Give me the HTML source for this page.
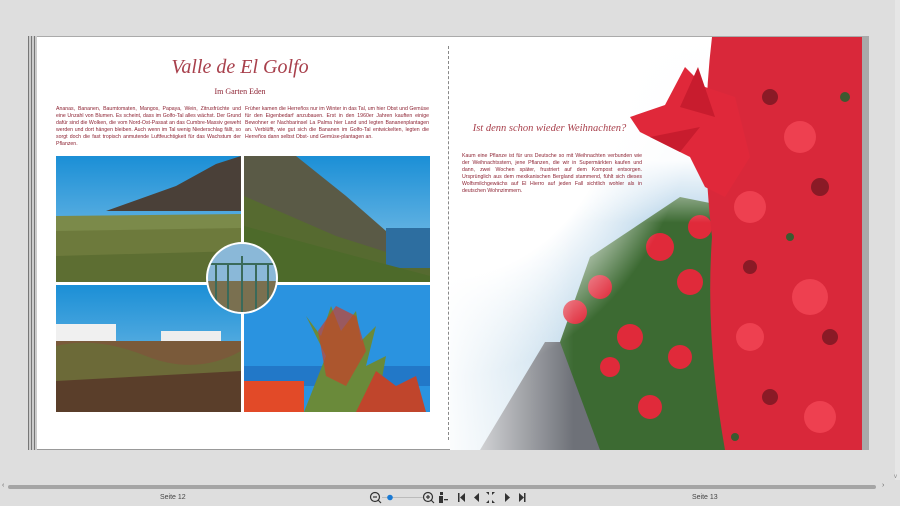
<!DOCTYPE html>
<html><head><meta charset="utf-8"><style>
*{margin:0;padding:0;box-sizing:border-box}
body{width:900px;height:506px;background:#dedede;position:relative;overflow:hidden;font-family:"Liberation Sans",sans-serif}
.abs{position:absolute}
.page{left:37px;top:36px;width:827px;height:414px;background:#fff;border-top:1px solid #aaa;border-bottom:1px solid #999}
.txt{font-size:5.2px;line-height:6.9px;color:#8c2232;text-align:justify}
.script{font-family:"Liberation Serif",serif;font-style:italic;color:#a8404c;white-space:nowrap}
</style></head><body>
<div class="abs" style="left:28px;top:36px;width:9px;height:414px;background:repeating-linear-gradient(90deg,#777 0 1px,#ccc 1px 3px)"></div>
<div class="page abs"></div>
<div class="abs" style="left:448px;top:46px;height:394px;border-left:1px dashed #888"></div>

<div class="abs script" style="left:140px;top:56px;width:200px;text-align:center;font-size:20px">Valle de El Golfo</div>
<div class="abs" style="left:140px;top:87px;width:200px;text-align:center;font-family:'Liberation Serif',serif;font-size:8px;color:#8c2232">Im Garten Eden</div>
<div class="abs txt" style="left:56px;top:106px;width:185px">Ananas, Bananen, Baumtomaten, Mangos, Papaya, Wein, Zitrusfrüchte und eine Unzahl von Blumen. Es scheint, dass im Golfo-Tal alles wächst. Der Grund dafür sind die Wolken, die vom Nord-Ost-Passat an das Cumbre-Massiv geweht werden und dort hängen bleiben. Auch wenn im Tal wenig Niederschlag fällt, so sorgt doch die fast tropisch anmutende Luftfeuchtigkeit für das Wachstum der Pflanzen.</div>
<div class="abs txt" style="left:245px;top:106px;width:184px">Früher kamen die Herreños nur im Winter in das Tal, um hier Obst und Gemüse für den Eigenbedarf anzubauen. Erst in den 1960er Jahren kauften einige Bewohner er Nachbarinsel La Palma hier Land und legten Bananenplantagen an. Verblüfft, wie gut sich die Bananen im Golfo-Tal entwickelten, legten die Herreños dann selbst Obst- und Gemüse-plantagen an.</div>

<svg class="abs" style="left:56px;top:156px" width="374" height="256" viewBox="0 0 374 256">
<defs>
<linearGradient id="sky" x1="0" y1="0" x2="0" y2="1"><stop offset="0" stop-color="#1b8fd6"/><stop offset="1" stop-color="#8ec8ea"/></linearGradient>
<clipPath id="c"><circle cx="186" cy="122" r="34"/></clipPath>
</defs>
<rect x="0" y="0" width="185" height="126" fill="url(#sky)"/>
<path d="M50 55 L120 30 L160 8 L185 0 L185 55 Z" fill="#4a4038"/>
<path d="M0 60 L185 58 L185 126 L0 126Z" fill="#7b8a4a"/>
<path d="M0 75 L185 72 L185 126 L0 126Z" fill="#6d7a3c"/>
<path d="M0 100 L185 95 L185 126 L0 126Z" fill="#5d6e32"/>
<rect x="188" y="0" width="186" height="126" fill="url(#sky)"/>
<path d="M188 0 L240 0 L290 40 L330 75 L374 80 L374 126 L188 126Z" fill="#5a5a46"/>
<path d="M188 40 L280 80 L374 110 L374 126 L188 126Z" fill="#566a30"/>
<rect x="330" y="72" width="44" height="40" fill="#2d6ea0"/>
<path d="M188 70 Q260 90 374 120 L374 126 L188 126Z" fill="#4d6a2a"/>
<rect x="0" y="129" width="185" height="127" fill="url(#sky)"/>
<rect x="0" y="168" width="60" height="18" fill="#f0f0f0"/>
<rect x="105" y="175" width="60" height="12" fill="#eee"/>
<rect x="0" y="185" width="185" height="71" fill="#7a5a3a"/>
<path d="M0 190 Q40 180 90 200 T185 195 L185 256 L0 256Z" fill="#6c6a38"/>
<path d="M0 225 L185 215 L185 256 L0 256Z" fill="#5a3e2a"/>
<rect x="188" y="129" width="186" height="127" fill="#2a93e0"/>
<rect x="188" y="210" width="186" height="20" fill="#2278c8"/>
<rect x="188" y="225" width="60" height="31" fill="#e24a28"/>
<path d="M248 256 L270 200 L250 160 L265 180 L275 150 L285 175 L300 155 L305 185 L320 170 L310 210 L330 200 L320 256Z" fill="#6a8a3a"/>
<path d="M262 175 L280 150 L300 160 L310 195 L290 230 L270 220Z" fill="#c9402a" opacity=".7"/>
<path d="M300 256 L320 215 L340 230 L360 220 L370 256Z" fill="#c0452c"/>
<rect x="185" y="0" width="3" height="256" fill="#fff"/>
<rect x="0" y="126" width="374" height="3" fill="#fff"/>
<circle cx="186" cy="122" r="36" fill="#fff"/>
<g clip-path="url(#c)"><rect x="150" y="88" width="72" height="70" fill="#8ab8d8"/><rect x="150" y="125" width="72" height="40" fill="#7a7050"/>
<g stroke="#3a6a5a" stroke-width="2"><line x1="150" y1="108" x2="222" y2="108"/><line x1="160" y1="108" x2="160" y2="160"/><line x1="172" y1="108" x2="172" y2="160"/><line x1="186" y1="100" x2="186" y2="160"/><line x1="200" y1="108" x2="200" y2="160"/><line x1="212" y1="108" x2="212" y2="160"/></g></g>
</svg>

<svg class="abs" style="left:450px;top:37px" width="413" height="413" viewBox="0 0 413 413">
<defs>
<radialGradient id="fade" cx="0" cy="0" r="1" gradientUnits="userSpaceOnUse" gradientTransform="translate(0 0) scale(300 400)">
<stop offset="0.6" stop-color="#fff" stop-opacity="1"/><stop offset="0.85" stop-color="#fff" stop-opacity="0"/></radialGradient>
<linearGradient id="fade2" x1="0" y1="0" x2="1" y2="0"><stop offset="0" stop-color="#fff" stop-opacity=".9"/><stop offset=".3" stop-color="#fff" stop-opacity="0"/></linearGradient>
<linearGradient id="fade3" x1="0" y1="0" x2="0" y2="1"><stop offset="0" stop-color="#fff" stop-opacity="1"/><stop offset=".3" stop-color="#fff" stop-opacity=".95"/><stop offset=".45" stop-color="#fff" stop-opacity="0"/></linearGradient>
<linearGradient id="rsky" x1="0" y1="0" x2="0" y2="1"><stop offset="0" stop-color="#9ec6e4"/><stop offset="1" stop-color="#d6e6f0"/></linearGradient>
</defs>
<rect width="413" height="413" fill="url(#rsky)"/>
<path d="M30 413 L95 305 L120 305 L165 413Z" fill="#6e7178"/>
<path d="M110 305 L140 220 L230 160 L280 170 L280 413 L150 413Z" fill="#3c6a32"/>
<g fill="#e02a3a"><circle cx="125" cy="275" r="12"/><circle cx="150" cy="250" r="12"/><circle cx="180" cy="300" r="13"/><circle cx="210" cy="210" r="14"/><circle cx="240" cy="245" r="13"/><circle cx="230" cy="320" r="12"/><circle cx="160" cy="330" r="10"/><circle cx="200" cy="370" r="12"/><circle cx="250" cy="190" r="12"/></g>
<rect width="413" height="413" fill="url(#fade)"/>
<rect width="413" height="413" fill="url(#fade2)"/>
<rect width="413" height="413" fill="url(#fade3)"/>
<path d="M262 0 L413 0 L413 413 L275 413 Q255 300 262 200 Q250 100 262 0Z" fill="#d9283a"/>
<g fill="#8a1a26"><circle cx="320" cy="60" r="8"/><circle cx="370" cy="150" r="9"/><circle cx="300" cy="230" r="7"/><circle cx="380" cy="300" r="8"/><circle cx="320" cy="360" r="8"/></g>
<g fill="#ee4050"><circle cx="350" cy="100" r="16"/><circle cx="300" cy="170" r="16"/><circle cx="360" cy="260" r="18"/><circle cx="300" cy="300" r="14"/><circle cx="370" cy="380" r="16"/></g>
<g fill="#3c5a30"><circle cx="395" cy="60" r="5"/><circle cx="340" cy="200" r="4"/><circle cx="285" cy="400" r="4"/></g>
<path d="M180 80 L215 68 L235 30 L255 50 L285 60 L300 120 L275 160 L255 150 L240 120 L190 95Z" fill="#e0283a"/>
<path d="M230 70 L248 30 L265 80Z M200 100 L250 90 L230 115Z" fill="#c81c2e"/>
</svg>
<div class="abs script" style="left:462px;top:123px;width:175px;text-align:center;font-size:10.5px">Ist denn schon wieder Weihnachten?</div>
<div class="abs txt" style="left:462px;top:153px;width:180px">Kaum eine Pflanze ist für uns Deutsche so mit Weihnachten verbunden wie der Weihnachtsstern, jene Pflanzen, die wir in Supermärkten kaufen und dann, zwei Wochen später, frustriert auf dem Kompost entsorgen. Ursprünglich aus dem mexikanischen Bergland stammend, fühlt sich dieses Wolfsmilchgewächs auf El Hierro auf jeden Fall sichtlich wohler als in deutschen Wohnzimmern.</div>
<div class="abs" style="left:862px;top:36px;width:7px;height:414px;background:#a9a9a9"></div>

<div class="abs" style="left:895px;top:0;width:5px;height:480px;background:#e6e6e6"></div>
<div class="abs" style="left:894px;top:474px;font-size:6px;color:#888">v</div>
<div class="abs" style="left:2px;top:482px;font-size:7px;color:#666">‹</div>
<div class="abs" style="left:8px;top:485px;width:868px;height:4px;border-radius:2px;background:#a5a5a5"></div>
<div class="abs" style="left:882px;top:482px;font-size:7px;color:#666">›</div>
<div class="abs" style="left:160px;top:494px;font-size:7px;color:#444">Seite 12</div>
<div class="abs" style="left:692px;top:494px;font-size:7px;color:#444">Seite 13</div>
<svg class="abs" style="left:368px;top:490px" width="160" height="15" viewBox="0 0 160 15">
<g stroke="#333" fill="none" stroke-width="1.2"><circle cx="7" cy="7" r="4.5"/><line x1="10" y1="10" x2="13" y2="13"/><line x1="5" y1="7" x2="9" y2="7"/>
<circle cx="60" cy="7" r="4.5"/><line x1="63" y1="10" x2="66" y2="13"/><line x1="58" y1="7" x2="62" y2="7"/><line x1="60" y1="5" x2="60" y2="9"/></g>
<line x1="14" y1="7.5" x2="55" y2="7.5" stroke="#bbb"/><circle cx="22" cy="7.5" r="2.8" fill="#1a7ad4"/>
<g fill="#333"><rect x="72" y="2" width="3" height="3"/><rect x="71" y="6" width="4" height="7"/><rect x="76" y="9" width="4" height="1.3"/>
<rect x="90" y="3" width="1.5" height="9"/><path d="M97 3 L92 7.5 L97 12Z"/><path d="M111 3 L106 7.5 L111 12Z"/>
<path d="M118 2 l3 0 0 3Z M127 2 l-3 0 0 3Z M118 13 l3 0 0 -3Z M127 13 l-3 0 0 -3Z"/>
<path d="M137 3 L142 7.5 L137 12Z"/><path d="M151 3 L156 7.5 L151 12Z"/><rect x="156" y="3" width="1.5" height="9"/></g>
</svg>
</body></html>
